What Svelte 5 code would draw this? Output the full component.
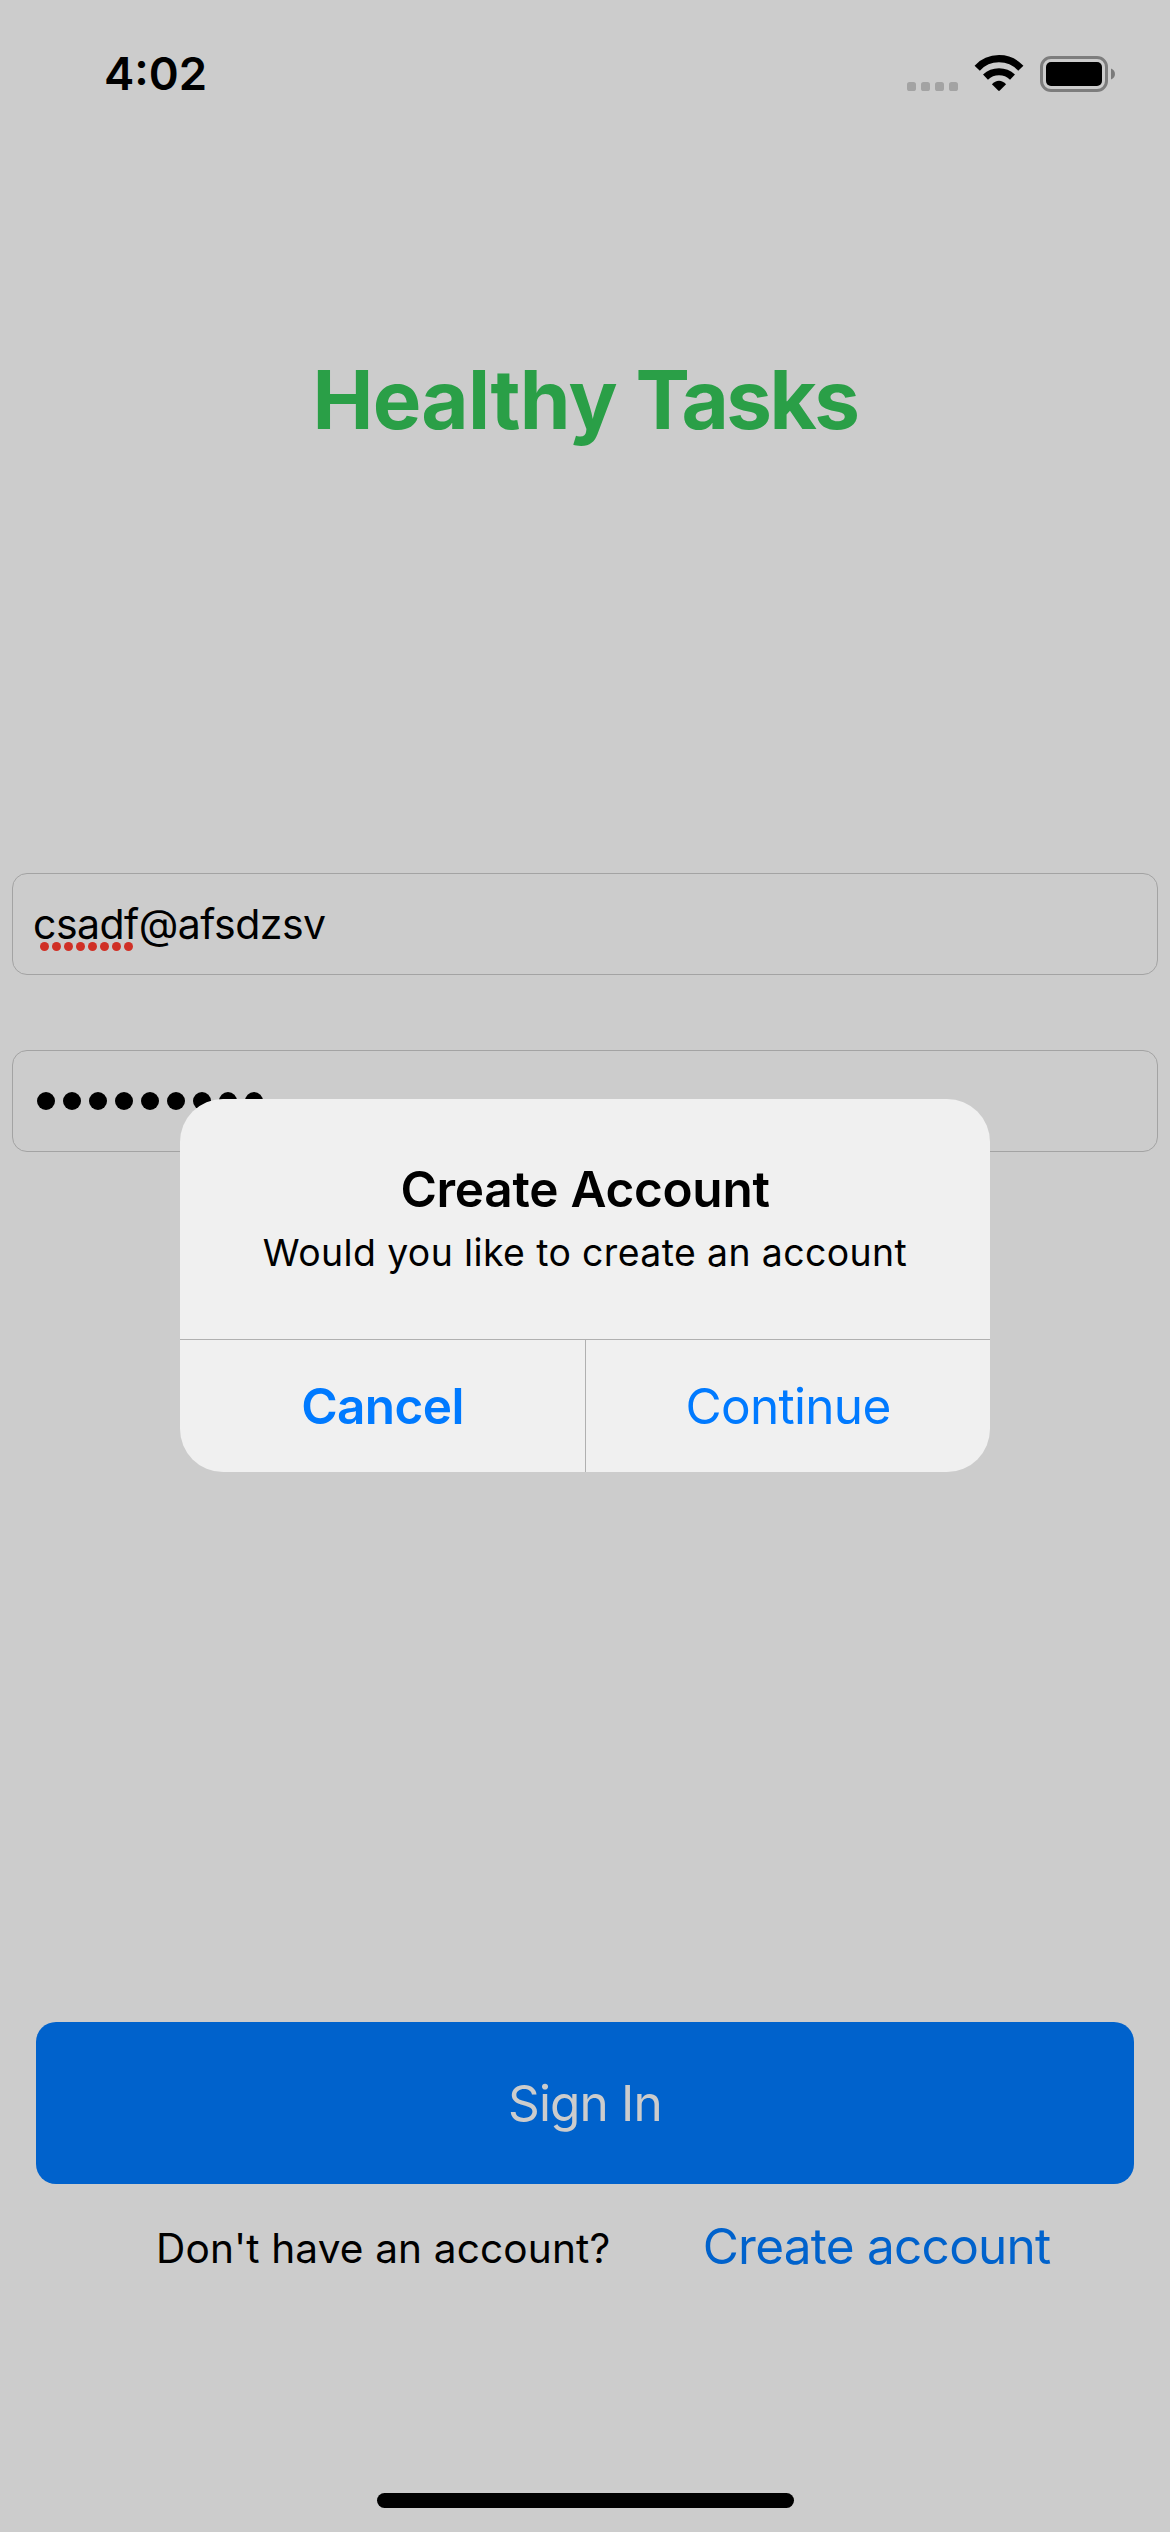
<script>
  const email = 'csadf@afsdzsv';
  const passwordLength = 9;
  const misspellingDots = 8;
  const signalDots = 4;
</script>

<div class="screen">
  <header class="status">
    <span class="time">4:02</span>
    <svg class="indicators" width="212" height="40" viewBox="905 54 212 40" aria-hidden="true">
      {#each Array(signalDots) as _, i}
        <rect x={907 + i * 14} y="82" width="9" height="9" rx="2.6" fill="#a3a3a3" />
      {/each}
      <g fill="none" stroke="#000" stroke-width="7.2">
        <path d="M977.2 68.2 A29.8 29.8 0 0 1 1020.8 68.2" />
        <path d="M985.5 77.1 A19.7 19.7 0 0 1 1012.5 77.1" />
      </g>
      <path d="M991.9 84.2 C996 79.5 1002 79.5 1006.1 84.2 L999.8 90.6 Q999 91.4 998.2 90.6 Z" />
      <rect x="1041.5" y="57.5" width="65" height="33" rx="9.5" fill="none" stroke="#7d7d7d" stroke-width="3" />
      <rect x="1046" y="62" width="56" height="24" rx="5" />
      <path d="M1111 68.5 C1116.3 70.5 1116.3 77.5 1111 79.5 Z" fill="#7a7a7a" />
    </svg>
  </header>

  <h1>Healthy <span>Tasks</span></h1>

  <form class="fields">
    <div class="field">
      <span class="email">
        {email}
        <span class="misspelling">
          {#each Array(misspellingDots) as _}<i></i>{/each}
        </span>
      </span>
    </div>
    <div class="field password">
      {#each Array(passwordLength) as _}<i></i>{/each}
    </div>
  </form>

  <button class="sign-in">Sign In</button>

  <footer class="signup">
    <span class="question">Don't have an account?</span>
    <a class="create">Create account</a>
  </footer>

  <div class="home-indicator"></div>

  <div class="overlay">
    <div class="alert" role="alertdialog">
      <div class="message">
        <h2>Create Account</h2>
        <p>Would you like to create an account</p>
      </div>
      <div class="actions">
        <button class="cancel">Cancel</button>
        <button class="continue">Continue</button>
      </div>
    </div>
  </div>
</div>

<style>
  :global(body) {
    margin: 0;
    background: #ccc;
  }

  .screen {
    position: relative;
    box-sizing: border-box;
    display: flex;
    flex-direction: column;
    width: 1170px;
    height: 2532px;
    overflow: hidden;
    background: #ccc;
    color: #000;
    font-family: Inter, 'Liberation Sans', sans-serif;
    font-size: 49.5px;
  }

  button {
    margin: 0;
    padding: 0;
    border: 0;
    background: none;
    font: inherit;
    white-space: nowrap;
  }

  .status {
    display: flex;
    align-items: center;
    justify-content: space-between;
    box-sizing: border-box;
    height: 148px;
    padding: 0 53px 0 104px;
  }

  .time {
    font-size: 45.5px;
    font-weight: 600;
    line-height: 60px;
  }

  h1 {
    margin: 202px 0 0;
    color: #2a9f47;
    font-size: 81.6px;
    font-weight: 700;
    line-height: 100px;
    letter-spacing: -0.75px;
    text-align: center;
  }

  h1 span {
    letter-spacing: -2.5px;
  }

  .fields {
    display: flex;
    flex-direction: column;
    gap: 75px;
    margin: 423px 12px 0;
  }

  .field {
    display: flex;
    align-items: center;
    box-sizing: border-box;
    height: 102px;
    padding-left: 20px;
    border: 1px solid #a3a3a3;
    border-radius: 15px;
  }

  .email {
    position: relative;
    font-size: 41px;
    line-height: 60px;
    letter-spacing: -0.522px;
  }

  .misspelling {
    position: absolute;
    top: 48px;
    left: 7px;
    display: flex;
    gap: 3px;
  }

  .misspelling i {
    width: 9px;
    height: 9px;
    border-radius: 50%;
    background: #d03026;
  }

  .password {
    gap: 8px;
    padding-left: 24px;
  }

  .password i {
    width: 18px;
    height: 18px;
    border-radius: 50%;
    background: #000;
  }

  .sign-in {
    height: 162px;
    margin: 870px 36px 0;
    border-radius: 20px;
    background: #0062cc;
    color: #ccc;
    letter-spacing: -0.828px;
  }

  .signup {
    display: flex;
    align-items: center;
    height: 80px;
    margin-top: 22px;
    padding-left: 156px;
    white-space: nowrap;
  }

  .question {
    width: 546.7px;
    padding-top: 4px;
    font-size: 40.6px;
    letter-spacing: 0.133px;
  }

  .create {
    color: #0062cc;
    letter-spacing: -0.75px;
  }

  .home-indicator {
    width: 417px;
    height: 15px;
    margin: auto auto 24px 377px;
    border-radius: 8px;
    background: #000;
  }

  .overlay {
    position: absolute;
    inset: 0;
    display: flex;
    align-items: flex-start;
    justify-content: center;
    padding-top: 1099px;
  }

  .alert {
    width: 810px;
    height: 373px;
    overflow: hidden;
    border-radius: 43px;
    background: #f0f0f0;
  }

  .message {
    box-sizing: border-box;
    height: 240px;
    padding-top: 60px;
    text-align: center;
    white-space: nowrap;
  }

  h2 {
    margin: 0;
    font-size: 49.5px;
    font-weight: 600;
    line-height: 60px;
    letter-spacing: -0.278px;
  }

  p {
    margin: 9px 0 0;
    font-size: 37.4px;
    line-height: 50px;
    letter-spacing: 0.395px;
  }

  .actions {
    display: grid;
    grid-template-columns: 406px 1fr;
    height: 132px;
    border-top: 1px solid #b0b0b0;
  }

  .actions button {
    color: #007aff;
    line-height: 132px;
  }

  .actions .cancel {
    border-right: 1px solid #b0b0b0;
    font-weight: 600;
    letter-spacing: -0.597px;
  }

  .actions .continue {
    letter-spacing: -0.683px;
  }
</style>
